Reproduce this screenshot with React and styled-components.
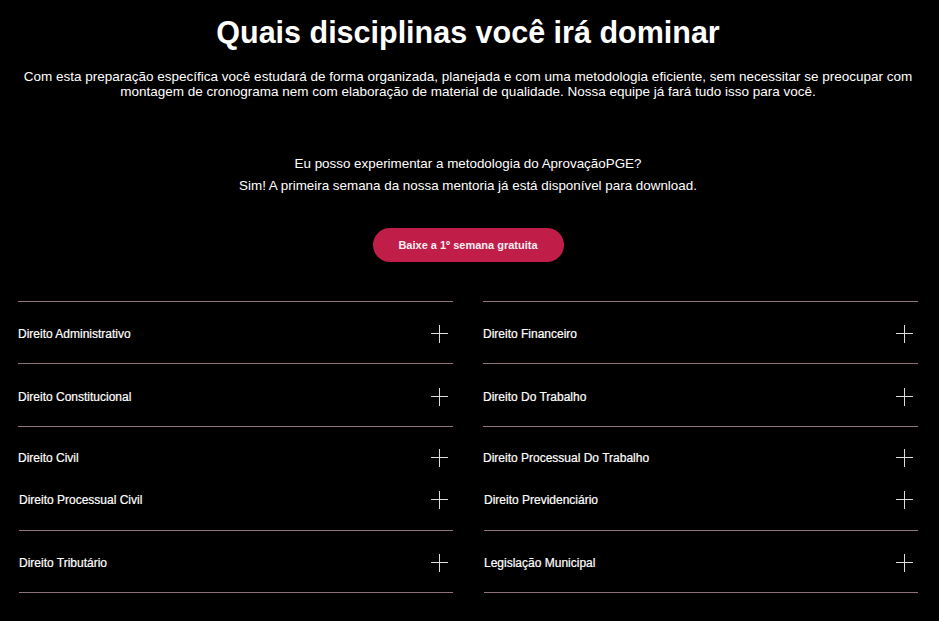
import React from "react";
import styled, { createGlobalStyle } from "styled-components";

const GlobalStyle = createGlobalStyle`
  html, body {
    margin: 0;
    padding: 0;
    background: #000;
  }
  body {
    font-family: "Liberation Sans", Arial, sans-serif;
    color: #fff;
  }
  *, *::before, *::after {
    box-sizing: border-box;
  }
`;

const Page = styled.main`
  width: 900px;
  margin-left: 18px;
  padding-top: 14px;
  display: flex;
  flex-direction: column;
  align-items: center;
`;

const Title = styled.h1`
  margin: 0;
  font-size: 30.5px;
  font-weight: 700;
  line-height: 36px;
  text-align: center;
`;

const Lead = styled.p`
  margin: 19px 0 0;
  font-size: 13.5px;
  line-height: 15px;
  text-align: center;
`;

const Questions = styled.div`
  margin-top: 54px;
  display: flex;
  flex-direction: column;
  align-items: center;
`;

const QLine = styled.p`
  margin: 0;
  font-size: 13.4px;
  line-height: 22.4px;
  text-align: center;
`;

const CtaButton = styled.button`
  margin-top: 30px;
  width: 191px;
  height: 34px;
  border: none;
  border-radius: 17px;
  background: #c11d49;
  color: #fbeef2;
  font-family: "Liberation Sans", Arial, sans-serif;
  font-size: 11px;
  font-weight: 700;
  cursor: pointer;
`;

const Columns = styled.div`
  align-self: stretch;
  margin-top: 39px;
  display: grid;
  grid-template-columns: 435px 435px;
  column-gap: 30px;
`;

const Column = styled.div`
  display: flex;
  flex-direction: column;
`;

const Group = styled.div`
  display: flex;
  flex-direction: column;
  margin-left: ${(p) => (p.$shift ? "1px" : "0")};
  border-top: ${(p) => (p.$topLine ? "1px solid #8d7377" : "none")};
`;

const Row = styled.div`
  display: flex;
  justify-content: space-between;
  align-items: ${(p) => (p.$short ? "flex-start" : "center")};
  height: ${(p) => (p.$short ? "41.25px" : "62.5px")};
  padding: ${(p) => (p.$short ? "22.5px 5px 0 0" : "3px 5px 0 0")};
  border-bottom: ${(p) => (p.$short ? "none" : "1px solid #8d7377")};
`;

const Label = styled.span`
  font-size: 12px;
  line-height: 18px;
  color: #fff;
  -webkit-text-stroke: 0.2px #fff;
`;

const PlusIcon = () => (
  <svg width="17" height="18" viewBox="0 0 17 18" aria-hidden="true">
    <line x1="0" y1="8.5" x2="17" y2="8.5" stroke="#dcdcdc" strokeWidth="1" />
    <line x1="8.5" y1="0" x2="8.5" y2="18" stroke="#dcdcdc" strokeWidth="1" />
  </svg>
);

const Item = ({ label, short }) => (
  <Row $short={short}>
    <Label>{label}</Label>
    <PlusIcon />
  </Row>
);

const left1 = ["Direito Administrativo", "Direito Constitucional", "Direito Civil"];
const left2 = ["Direito Processual Civil", "Direito Tributário"];
const right1 = ["Direito Financeiro", "Direito Do Trabalho", "Direito Processual Do Trabalho"];
const right2 = ["Direito Previdenciário", "Legislação Municipal"];

const ColumnBlock = ({ first, second }) => (
  <Column>
    <Group $topLine>
      {first.map((l, i) => (
        <Item key={l} label={l} short={i === first.length - 1} />
      ))}
    </Group>
    <Group $shift>
      {second.map((l) => (
        <Item key={l} label={l} />
      ))}
    </Group>
  </Column>
);

export default function App() {
  return (
    <>
      <GlobalStyle />
      <Page>
        <Title>Quais disciplinas você irá dominar</Title>
        <Lead>
          Com esta preparação específica você estudará de forma organizada, planejada e com uma
          metodologia eficiente, sem necessitar se preocupar com montagem de cronograma nem com
          elaboração de material de qualidade. Nossa equipe já fará tudo isso para você.
        </Lead>
        <Questions>
          <QLine>Eu posso experimentar a metodologia do AprovaçãoPGE?</QLine>
          <QLine>Sim! A primeira semana da nossa mentoria já está disponível para download.</QLine>
        </Questions>
        <CtaButton>Baixe a 1º semana gratuita</CtaButton>
        <Columns>
          <ColumnBlock first={left1} second={left2} />
          <ColumnBlock first={right1} second={right2} />
        </Columns>
      </Page>
    </>
  );
}
